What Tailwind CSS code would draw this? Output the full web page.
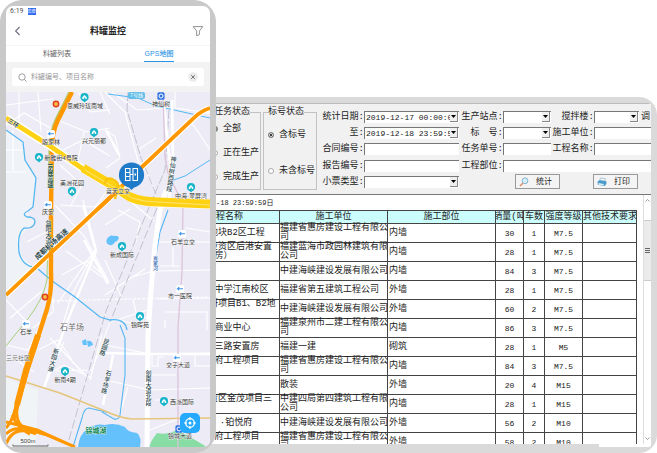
<!DOCTYPE html>
<html lang="zh-CN">
<head>
<meta charset="utf-8">
<meta name="viewport" content="width=device-width, initial-scale=1">
<title>料罐监控</title>
<script src="https://cdn.jsdelivr.net/npm/@tailwindcss/browser@4"></script>
</head>
<body class="bg-white font-['Liberation_Sans','Noto_Sans_CJK_SC',sans-serif] text-[#333]">
<main class="flex h-screen min-h-[453px] overflow-hidden">

  <!-- Phone -->
  <section class="z-10 flex w-[216px] shrink-0 rounded-[22px] bg-[#c9c9c9] p-[6px]">
   <div class="flex min-w-0 flex-1 flex-col overflow-hidden rounded-[7px] bg-white">
    <div class="flex h-[11px] items-center gap-1 pl-1 text-[7px] leading-[11px] text-[#555] font-['Roboto',sans-serif]">
      <span>6:19</span>
      <span class="h-[7px] w-[8px] bg-[#2f6bf0] text-center text-[4px] leading-[7px] text-white font-['Noto_Sans_CJK_SC',sans-serif]">高德</span>
    </div>
    <header class="flex h-[28px] items-center justify-between px-[6px]">
      <button aria-label="返回" class="flex h-3 w-3 items-center"><svg viewBox="0 0 12 12" class="h-3 w-3" fill="none" stroke="#6b7080" stroke-width="1.1"><path d="M7.600 2 3.600 6l4 4"/></svg></button>
      <h1 class="text-[9px] font-bold leading-3 text-[#222]">料罐监控</h1>
      <button aria-label="筛选" class="h-3 w-3"><svg viewBox="0 0 12 12" class="h-3 w-3" fill="none" stroke="#888" stroke-width=".9" stroke-linejoin="round"><path d="M1.2 1.6h9.6L7.4 6v3.6l-2.8 1.2V6z"/></svg></button>
    </header>
    <nav class="grid h-[17px] grid-cols-2 border-t border-[#f5f5f5] text-center text-[7px] leading-[15px]">
      <a href="#" class="mx-auto w-[30px] text-[#666] no-underline">料罐列表</a>
      <a href="#" class="mx-auto w-[30px] whitespace-nowrap border-b-2 border-[#2a94e4] font-medium text-[#2a94e4]">GPS地图</a>
    </nav>
    <div class="bg-[#f3f3f4] px-[6px] py-[6px]">
      <div class="flex h-[18px] items-center gap-1 rounded-[3px] bg-white px-[6px]">
        <svg viewBox="0 0 9 9" class="h-[9px] w-[9px] shrink-0" fill="none" stroke="#888" stroke-width=".8"><circle cx="4" cy="4" r="3.2"/><path d="m6.3 6.3 2.2 2.2"/></svg>
        <input id="q" type="search" aria-label="搜索" placeholder="料罐编号、项目名称" class="min-w-0 flex-1 bg-transparent text-[7px] leading-[10px] outline-none placeholder:text-[#999]">
        <button aria-label="清除" class="h-[10px] w-[10px] shrink-0"><svg viewBox="0 0 10 10" class="h-[10px] w-[10px]"><circle cx="5" cy="5" r="4.8" fill="#ebebeb"/><path d="m3.2 3.2 3.6 3.6m0-3.6L3.2 6.8" stroke="#666" stroke-width=".9"/></svg></button>
      </div>
    </div>
    <div class="relative min-h-0 flex-1">
      <svg viewBox="6 92 204 355" preserveAspectRatio="xMidYMid slice" class="h-full w-full font-['Liberation_Sans','Noto_Sans_CJK_SC',sans-serif]" role="img" aria-label="GPS地图">
        <defs>
          <g id="pin"><path d="M0 5.6-2.6 2.8h5.2z" fill="#18b4c9"/><circle r="4.1" fill="#18b4c9"/><path d="M-2.2.2 0-2 2.2.2v1.9H.8V.6H-.6v1.5h-1.6z" fill="#fff"/></g>
          <g id="stop"><rect x="-4" y="-4" width="8" height="8" rx="2" fill="#fff"/><path d="M3-.2H-2.4L-.8-1.8M-2.4-.2-.8 1" fill="none" stroke="#3d96e8" stroke-width="1.1"/></g>
          <g id="toll"><circle r="3.4" fill="#e0421c"/><circle r="1.9" fill="#f9b84c"/></g>
          <g id="metro"><rect x="-3.6" y="-3.8" width="7.2" height="7.6" rx="1.6" fill="#2f73e0"/><circle r="2" fill="none" stroke="#fff" stroke-width="1"/></g>
        </defs>
        <rect x="6" y="92" width="204" height="355" fill="#edebf6"/>
        <path d="M6 130 23 142 25 160 36 178 33 207 28 215 35 222 20 237 21 255 34 267 6 292Z" fill="#eff3f8"/>
        <path d="M6 378 38 390 36 447H6Z" fill="#f0f4f7"/>
        <!-- minor streets -->
        <g fill="none" stroke="#fff" stroke-width="1.1">
          <path d="M6 105 53 99M19 92v30M38 92l3 40M6 125l18-12 28 16M57 120l30 12 23-4M84 132l-6 28M63 150l20-10 27 16M78 92l12 20 20-2M100 92l10 22M60 165l22 20-12 22M60 205l35 2 15-20M6 150h17M6 172h20M13 130v40"/>
          <path d="M105 92l20 20 14 52M105 130l10 6 5 22-14 10M112 92l25 18 30-2M138 150l18-12M143 165l12 25M190 120l20 30M175 92v16l35 5"/>
          <path d="M27 242 50 230l14 15M55 205l30 32 24 45M95 250l-24 47-9 30M83 200l13 48-38 55M110 185l20 16 24 20M62 275l25-14 21 18M10 318l32-27M6 300l24 25M53 298v14l-20 16M66 251l36 26"/>
          <path d="M105 225l25-16M118 210l22 12-4 20M105 260l16 36M105 295l40-26M158 242h52M156 271l54-1M160 266h20M173 247v19M132 277l22-6M186 228l24 4M158 299l52-1M133 300l4 16 13 2M120 320l28 8M165 312h42v18M165 320v8M110 322l38-12"/>
          <path d="M38 330 28 350 6 345M50 338l38 40M16 360l18 12M38 350l20-10 14 20M44 388l20-46M90 380l12-46M92 378l-28-13-14 8M105 345l45 9 60-1M105 380l45 10 60-2M128 387l-8 26M152 354v12h6v-9h6M195 354v12h15M150 375h26M150 430l30-12M155 400h22"/>
          <path d="M52 301 210 297" stroke-dasharray="3 1.5"/>
        </g>
        <path d="m110 322-18 48-36 1" fill="none" stroke="#fff" stroke-width="1"/>
        <g fill="none" stroke="#fff" stroke-width="2.4"><path d="m83 205 13 46-31 76M65 327 44 388M84 240l24 44M105 353l40 1h65M103 405l10-50M106 130l13 25"/></g>
        <!-- railways -->
        <g fill="none" stroke="#bbbdca" stroke-width=".9">
          <path d="m128 92-1 18 14 48 15 36M169 110l-4 60-13 30" stroke-dasharray="9 2"/>
          <path d="m150 205-44 106-38 132M157 208 110 322" stroke-dasharray="9 3"/>
        </g>
        <!-- water -->
        <g fill="none" stroke="#55b7f2" stroke-width="1.3">
          <path d="M6 130 23 142 25 160 36 178 33 207 28 211q-7 3-1 6 8 0 8 5-1 7-11 6-7 5-5 24 2 10 10 14l8 2 8 7 10 8 20 14 25 20 10 3q15-2 17 10"/>
          <path d="m120 325 5 13v37l-5 40q-1 5-6 4l-12-7M168 210l-8 22-6 35-6 50" stroke-width="1.1"/>
          <path d="m108 94 30 4 18 8 54 12M210 160l-25 16-17 6" stroke-width="1"/>
          <path d="m73 447 9-29q2-10 7-10l21 5" stroke-width="1.1"/>
        </g>
        <path d="M78 447q1-12 9-18 9-6 18-4 10-3 20 2 2 5 12 6 5 4 3 14z" fill="#64c1fb"/>
        <path d="M107 239q3-5 7-3 4-1 5 2-1 3-4 4-2 4-5 3-5-1-3-6zM82 341l4-2 1 6h-4zM87 341q5-1 6 4l-5 2z" fill="#64c1fb"/>
        <path d="m149 447 3-7 5-7q10 2 18-2l10 3 22 13z" fill="#88dda5"/>
        <!-- white arterial -->
        <path d="m163 92 5 55 4 28-4 30M172 100l1 60-4 40" fill="none" stroke="#fff" stroke-width="2.6"/>
        <path d="m166 190-6 20-5 35-4 45-3 45-1 112" fill="none" stroke="#fff" stroke-width="5"/>
        <path d="m163 92 2 65 3 16 15 32-1 67-4 55v120" fill="none" stroke="#dcc3da" stroke-width="1.3"/>
        <path d="m6 376 54 17 45 18q15 7 27 8l78-1" fill="none" stroke="#e6c67c" stroke-width="1.5"/>
        <path d="M50 205q-3 60-3 75-4 20-20 40L6 346" fill="none" stroke="#a4cf7a" stroke-width="1"/>
        <!-- expressways -->
        <g fill="none">
          <path d="M6 295 102 205 143 166 195 117q6-6 15-9" stroke="#fff" stroke-width="6"/>
          <path d="m6 295 96-90 41-39 52-49q6-6 15-9" stroke="#ff9800" stroke-width="3.8"/>
          <path d="M71 92 57 120q-5 10-6 28l-1 40" stroke="#b5c769" stroke-width="5"/>
          <path d="M72 92 58 120q-6 12-6 28l-1 60v65q1 18-4 36L28 368 18 402q-2 10-5 18" stroke="#ff9800" stroke-width="4.4"/>
          <path d="M38 335 26 370l-9 35" stroke="#ff9800" stroke-width="6"/>
          <path d="M17 400Q14 420 6 428M18 398q-4 22 4 28 12 6 25 9l28 12M6 422q16 4 31 8l36 16M6 434q10-10 24-1M6 444q8-20 30-10M12 415q6 14 18 19" stroke="#ff9800" stroke-width="3"/>
          <path d="m6 118 44 28 33 23 27 16 20 13q12 5 28 5l52 2" stroke="#fff" stroke-width="8"/>
          <path d="m6 118 44 28 33 23 27 16" stroke="#ffd113" stroke-width="5"/>
          <path d="m83 168 27 16 20 13q12 5 28 5l52 2" stroke="#ffd113" stroke-width="9"/>
          <path d="m85 170 25 15 22 13q12 4 26 4l52 3" stroke="#ffe98a" stroke-width=".8"/>
          <path d="m105 184q0-7 7-5 7 3 6 8l-3 12" stroke="#f9c40d" stroke-width="2.4"/>
          <path d="m98 209 18-17" stroke="#ff9800" stroke-width="3.8"/>
        </g>
        <!-- pins -->
        <use href="#pin" x="84.500" y="97"/><use href="#pin" x="94" y="132"/><use href="#pin" x="39" y="157"/><use href="#pin" x="72" y="191"/><use href="#pin" x="191" y="187"/><use href="#pin" x="122" y="246"/><use href="#pin" x="140" y="316"/><use href="#pin" x="65" y="371"/><use href="#pin" x="164" y="401"/>
        <use href="#stop" x="51" y="134"/><use href="#stop" x="48" y="205"/><use href="#stop" x="182" y="234"/><use href="#stop" x="180" y="289"/><use href="#stop" x="177" y="358"/><use href="#stop" x="26" y="324"/>
        <use href="#toll" x="56" y="104"/><use href="#toll" x="45" y="297"/>
        <use href="#metro" x="161" y="96"/><use href="#metro" x="179" y="429"/>
        <rect x="128" y="92" width="17" height="7" rx="2" fill="#62bde8"/>
        <!-- labels -->
        <g font-size="6" fill="#333" stroke="#fff" stroke-width=".6" paint-order="stroke" text-anchor="middle">
          <text x="136.500" y="97" font-size="5" fill="#fff" stroke="none">7号线</text>
          <text x="85" y="108">恩威玲珑南域</text><text x="94" y="143">兴元丽都</text><text x="51" y="144">殷家林</text>
          <text x="61" y="160">新雅街4号院</text><text x="72" y="185">美洲花园</text><text x="48" y="214">庆安</text>
          <text x="161" y="106">神仙树</text><text x="191" y="198">中海·翠屏湾</text><text x="118" y="193">蓝天立交</text>
          <text x="183" y="244">石羊立交</text><text x="122" y="257">新成国际</text><text x="180" y="298">市一医院</text>
          <text x="140" y="327">锦晖苑</text><text x="26" y="334">石羊</text><text x="65" y="382">新南4期</text>
          <text x="178" y="367">交子大道</text><text x="182" y="404">西派国际</text><text x="180" y="438">锦城大道</text>
          <text x="18" y="360" fill="#666">三元社区</text>
          <text x="72" y="330" font-size="8" fill="#666">石羊场</text>
          <text x="96" y="433" font-size="7" font-weight="bold" fill="#138a55">锦城湖</text>
        </g>
        <g font-size="6" font-weight="500" fill="#2c4a52" stroke="#fff" stroke-width=".6" paint-order="stroke" text-anchor="middle">
          <text transform="translate(12 125) rotate(32)" font-weight="bold">三环</text>
          <text transform="translate(53 246) rotate(-42)" font-size="7" font-weight="bold">成都机场高速</text>
          <text x="50" y="176" font-weight="bold" fill="#14493f" class="[writing-mode:vertical-rl]">京昆高速</text>
          <text x="48" y="232" class="[writing-mode:vertical-rl]">益阳大道</text>
          <text transform="translate(171 174) rotate(8)" class="[writing-mode:vertical-rl]">神仙树西路段</text>
          <text x="155" y="263" fill="#3a6eb5" font-size="5" class="[writing-mode:vertical-rl]">肖家河</text>
          <text transform="translate(53 360) rotate(16)" class="[writing-mode:vertical-rl]">新园大道</text>
          <text transform="translate(104 347) rotate(18)" class="[writing-mode:vertical-rl]">昆园路</text>
          <text transform="translate(106 382) rotate(14)" class="[writing-mode:vertical-rl]">石羊场路</text>
          <text x="148" y="388" class="[writing-mode:vertical-rl]">剑南大道北段</text>
        </g>
        <!-- selected tank marker -->
        <path d="m131.500 190-5-5h10z" fill="#1f7bc9"/><circle cx="131.500" cy="175" r="12.600" fill="#1f7bc9"/>
        <g fill="none" stroke="#fff" stroke-width="1.100"><path d="M125.500 168.500h4.500v12h-4.500zM133 168.500h4.500v12H133zM125.500 172.500h4.500M125.500 176.500h4.500M130 174.500h3"/></g>
        <path d="M134.500 173.500h1.500v2h-1.500z" fill="#fff"/>
        <!-- scale bar -->
        <text x="28" y="443" font-size="6" fill="#333" stroke="#fff" stroke-width=".8" paint-order="stroke" text-anchor="middle">500m</text>
        <path d="M13 444.500v1.500h35v-1.500" fill="none" stroke="#555" stroke-width=".9"/>
      </svg>
      <button aria-label="定位" class="absolute bottom-[14px] right-[10px] h-5 w-5 rounded-[5px] bg-[#25aaff]"><svg viewBox="0 0 20 20" class="h-5 w-5" fill="none" stroke="#fff"><circle cx="10" cy="10" r="4.300" stroke-width="1.300"/><circle cx="10" cy="10" r="1.500" fill="#fff" stroke="none"/><path d="M10 4v3m0 6v3M4 10h3m6 0h3" stroke-width="1.200"/></svg></button>
    </div>
   </div>
  </section>

  <!-- Desktop report window -->
  <section class="-ml-[46px] mt-[97px] flex min-w-0 flex-1 rounded-r-[18px] bg-[#dadada] py-[6px] pr-[6px]">
   <div class="flex min-w-0 flex-1 flex-col overflow-hidden rounded-r-[3px] bg-white text-[9px] leading-[10px] text-[#222] font-['Liberation_Mono','Noto_Sans_CJK_SC',monospace]">
    <form class="flex h-[92px] shrink-0 gap-[2px] border-b border-t border-b-[#777] border-t-[#bbb] bg-[#f1f1f1] pb-[4px] pl-[38px] pt-[3px]">
      <fieldset class="flex w-[53px] shrink-0 flex-col justify-around border border-[#c2c2c2] pl-[3px]">
        <legend class="ml-[2px] whitespace-nowrap leading-[10px]">任务状态</legend>
        <label class="flex items-center gap-[5px] whitespace-nowrap"><input type="radio" name="task" checked class="h-[6px] w-[6px] shrink-0 appearance-none rounded-full border border-[#888] bg-white checked:border-2 checked:bg-black">全部</label>
        <label class="flex items-center gap-[5px] whitespace-nowrap"><input type="radio" name="task" class="h-[6px] w-[6px] shrink-0 appearance-none rounded-full border border-[#aaa] bg-white">正在生产</label>
        <label class="flex items-center gap-[5px] whitespace-nowrap"><input type="radio" name="task" class="h-[6px] w-[6px] shrink-0 appearance-none rounded-full border border-[#aaa] bg-white">完成生产</label>
      </fieldset>
      <fieldset class="flex w-[54px] shrink-0 flex-col justify-around border border-[#c2c2c2] pl-[4px]">
        <legend class="whitespace-nowrap leading-[10px]">标号状态</legend>
        <label class="flex items-center gap-[5px] whitespace-nowrap"><input type="radio" name="grade" checked class="h-[6px] w-[6px] shrink-0 appearance-none rounded-full border border-[#888] bg-black ring-1 ring-inset ring-white">含标号</label>
        <label class="flex items-center gap-[5px] whitespace-nowrap"><input type="radio" name="grade" class="h-[6px] w-[6px] shrink-0 appearance-none rounded-full border border-[#aaa] bg-white">未含标号</label>
      </fieldset>
      <div class="grid min-w-0 flex-1 grid-cols-[45px_95px_44px_48px_43px_minmax(0,1fr)] grid-rows-5 items-center whitespace-nowrap pt-[2px] [&>label]:justify-self-end [&_input]:h-[12px] [&_input]:w-full [&_input]:min-w-0 [&_input]:border-l [&_input]:border-t [&_input]:border-[#777] [&_input]:bg-white [&_select]:h-[12px] [&_select]:w-full [&_select]:appearance-none [&_select]:border-l [&_select]:border-t [&_select]:border-[#777] [&_select]:bg-white [&_select]:pl-[1px] [&_select]:pr-[9px] [&_select]:text-[8px] [&_select]:leading-[10px] [&_i]:pointer-events-none [&_i]:absolute [&_i]:bottom-[1px] [&_i]:right-[1px] [&_i]:top-[1px] [&_i]:flex [&_i]:w-[8px] [&_i]:items-center [&_i]:justify-center [&_i]:border-b [&_i]:border-r [&_i]:border-[#888] [&_i]:bg-[#efefef] [&_svg]:h-[3px] [&_svg]:w-[5px]">
        <label for="d1">统计日期:</label>
        <div class="relative"><select id="d1"><option>2019-12-17 00:00:00</option></select><i><svg viewBox="0 0 5 3"><path d="M0 0h5L2.500 3z"/></svg></i></div>
        <label for="st">生产站点:</label>
        <div class="relative"><select id="st"><option></option></select><i><svg viewBox="0 0 5 3"><path d="M0 0h5L2.500 3z"/></svg></i></div>
        <label for="mx">搅拌楼:</label>
        <div class="flex items-center gap-[2px] overflow-hidden"><div class="relative w-[45px] shrink-0"><select id="mx"><option></option></select><i><svg viewBox="0 0 5 3"><path d="M0 0h5L2.500 3z"/></svg></i></div><span>调.</span></div>

        <label for="d2">至:</label>
        <div class="relative"><select id="d2"><option>2019-12-18 23:59:59</option></select><i><svg viewBox="0 0 5 3"><path d="M0 0h5L2.500 3z"/></svg></i></div>
        <label for="gr">标　号:</label>
        <div class="relative"><select id="gr"><option></option></select><i><svg viewBox="0 0 5 3"><path d="M0 0h5L2.500 3z"/></svg></i></div>
        <label for="un">施工单位:</label><input id="un" type="text">

        <label for="ct">合同编号:</label><input id="ct" type="text">
        <label for="tk">任务单号:</label><input id="tk" type="text">
        <label for="pn">工程名称:</label><input id="pn" type="text">

        <label for="rp">报告编号:</label><input id="rp" type="text">
        <label for="pt">工程部位:</label><div class="col-span-3"><input id="pt" type="text" class="block"></div>

        <label for="ty">小票类型:</label>
        <div class="relative"><select id="ty"><option></option></select><i><svg viewBox="0 0 5 3"><path d="M0 0h5L2.500 3z"/></svg></i></div>
        <div class="col-span-4 flex justify-between pl-[56px] pr-[13px]">
          <button type="button" class="flex h-[15px] w-[45px] items-center gap-[7px] border border-[#999] bg-[#f4f4f4] pl-[3px] text-[8px]"><svg viewBox="0 0 10 10" class="!h-[10px] !w-[10px] shrink-0"><circle cx="6" cy="3.800" r="2.900" fill="#d5f1fb" stroke="#7eabc9" stroke-width=".9"/><path d="M3.800 6.200 1 9" stroke="#d9906f" stroke-width="1.600"/></svg>统计</button>
          <button type="button" class="flex h-[15px] w-[45px] items-center gap-[7px] border border-[#999] bg-[#f4f4f4] pl-[3px] text-[8px]"><svg viewBox="0 0 10 10" class="!h-[10px] !w-[10px] shrink-0"><path d="m2.500 3.500 1-2.500 5 .8-1 2.500z" fill="#e7f5fc" stroke="#86a9c0" stroke-width=".6"/><path d="m.6 4.500 2-1.300 6.800 1v2.600L7.800 9 .8 7.700z" fill="#4a9bc9"/><path d="m1.500 6 5.500 1-.5 1.600-5-.9z" fill="#d5ecf7"/></svg>打印</button>
        </div>
      </div>
    </form>

    <div class="flex min-h-0 flex-1">
      <div class="min-w-0 flex-1 overflow-hidden pr-[6px]">
        <p class="h-[15px] pl-[46px] text-[7px] leading-[16px]">-18 23:59:59日</p>
        <table class="w-full table-fixed border-collapse whitespace-nowrap text-left leading-[9px] [&_td]:h-[19px] [&_td]:border [&_td]:border-[#444] [&_td]:p-0 [&_td:nth-child(1)]:pl-[38px] [&_td:nth-child(3)]:pl-px [&_td:nth-child(n+4)]:text-center [&_td:nth-child(n+4)]:text-[8px] [&_th]:h-[13px] [&_th]:overflow-hidden [&_th]:border [&_th]:border-[#444] [&_th]:bg-[#ccfdfd] [&_th]:p-0 [&_th]:text-center [&_th]:font-normal">
          <colgroup><col class="w-[109px]"><col class="w-[108px]"><col class="w-[108px]"><col class="w-[28px]"><col class="w-[21px]"><col class="w-[38px]"><col></colgroup>
          <thead><tr><th>工程名称</th><th>施工单位</th><th>施工部位</th><th><span class="flex justify-center"><span>销量(吨</span></span></th><th>车数</th><th>强度等级</th><th>其他技术要求</th></tr></thead>
          <tbody>
            <tr><td>地块B2区工程</td><td>福建省惠房建设工程有限公<br>司</td><td>内墙</td><td>30</td><td>1</td><td>M7.5</td><td></td></tr>
            <tr><td>投资区后港安置<br>&nbsp;房）</td><td>福建蓝海市政园林建筑有限<br>公司</td><td>内墙</td><td>28</td><td>1</td><td>M7.5</td><td></td></tr>
            <tr><td></td><td>中建海峡建设发展有限公司</td><td>内墙</td><td>84</td><td>3</td><td>M7.5</td><td></td></tr>
            <tr><td>&nbsp;中学江南校区</td><td>福建省第五建筑工程公司</td><td>外墙</td><td>28</td><td>1</td><td>M7.5</td><td></td></tr>
            <tr><td>研项目B1、B2地<br>&nbsp;</td><td>中建海峡建设发展有限公司</td><td>外墙</td><td>60</td><td>2</td><td>M7.5</td><td></td></tr>
            <tr><td>&nbsp;商业中心</td><td>福建泉州市二建工程有限公<br>司</td><td>内墙</td><td>86</td><td>3</td><td>M7.5</td><td></td></tr>
            <tr><td>&nbsp;三路安置房</td><td>福建一建</td><td>砌筑</td><td>28</td><td>1</td><td>M5</td><td></td></tr>
            <tr><td>&nbsp;府工程项目<br>&nbsp;</td><td>福建省惠房建设工程有限公<br>司</td><td>内墙</td><td>84</td><td>3</td><td>M7.5</td><td></td></tr>
            <tr><td></td><td>散装</td><td>外墙</td><td>20</td><td>4</td><td>M15</td><td></td></tr>
            <tr><td>资区金茂项目三<br>&nbsp;</td><td>中建四局第四建筑工程有限<br>公司</td><td>内墙</td><td>28</td><td>1</td><td>M15</td><td></td></tr>
            <tr><td>&nbsp;&nbsp;·铂悦府</td><td>中建海峡建设发展有限公司</td><td>外墙</td><td>56</td><td>2</td><td>M10</td><td></td></tr>
            <tr><td>&nbsp;府工程项目<br>&nbsp;</td><td>福建省惠房建设工程有限公<br>司</td><td>外墙</td><td>58</td><td>2</td><td>M10</td><td></td></tr>
          </tbody>
        </table>
      </div>
      <div class="flex w-[8px] shrink-0 flex-col items-center border-l border-[#ddd] bg-white">
        <svg viewBox="0 0 5 3" class="mb-[18px] mt-[4px] h-[3px] w-[5px]" fill="none" stroke="#888" stroke-width=".8"><path d="m.5 2.500 2-2 2 2"/></svg>
        <div class="flex h-[61px] w-full items-center justify-center border-y border-[#ccc] bg-[#ebebeb]"><svg viewBox="0 0 5 5" class="h-[5px] w-[5px]" stroke="#555" stroke-width=".9"><path d="M0 .5h5M0 2.500h5M0 4.500h5"/></svg></div>
        <svg viewBox="0 0 5 3" class="mb-[4px] mt-auto h-[3px] w-[5px]" fill="none" stroke="#888" stroke-width=".8"><path d="m.5.5 2 2 2-2"/></svg>
      </div>
    </div>
    <div class="flex h-[3px] shrink-0 bg-white pr-[52px]"><div class="flex-1 bg-[#dadada]"></div></div>
   </div>
  </section>
</main>
</body>
</html>
